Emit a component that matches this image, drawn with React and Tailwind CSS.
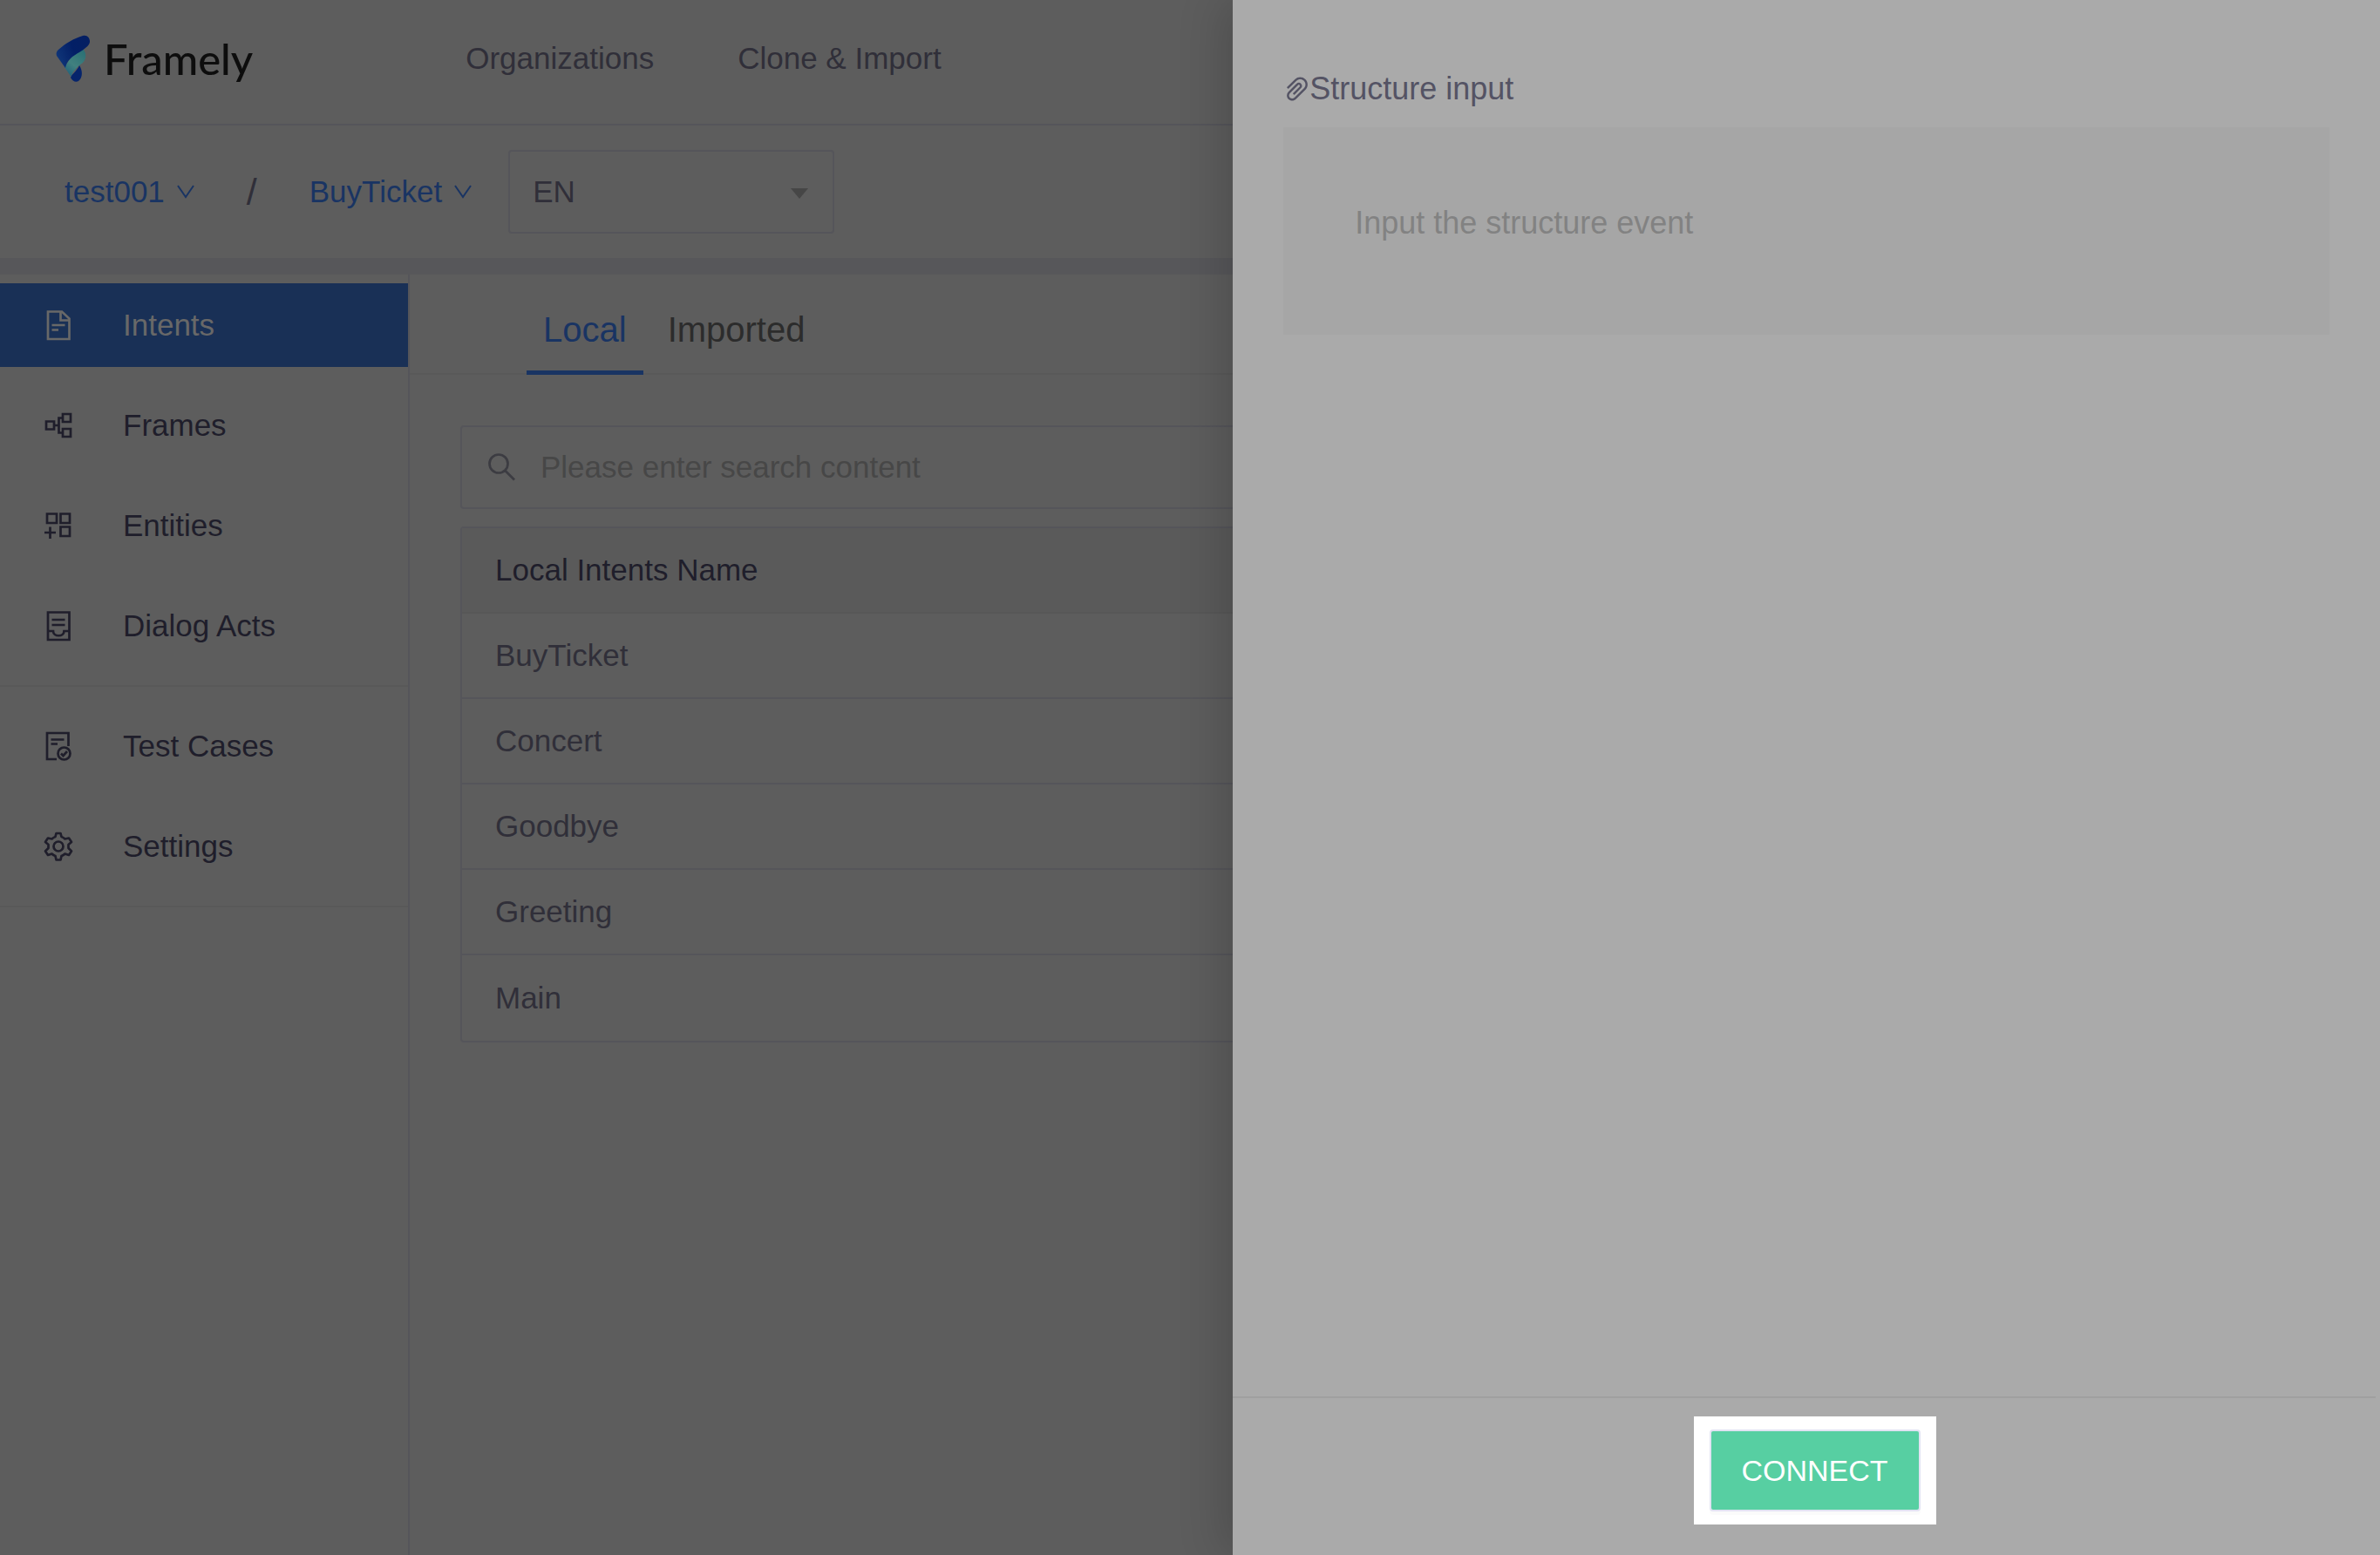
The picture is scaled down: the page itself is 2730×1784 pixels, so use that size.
import React from "react";
import { AiOutlinePaperClip } from "react-icons/ai";

const stroke = { fill: "none", stroke: "currentColor", strokeWidth: 2.7 };

function Logo() {
  return (
    <svg viewBox="0 0 40 54" className="h-[54px] w-10 shrink-0" aria-hidden="true">
      <defs>
        <linearGradient id="g1" x1="0" y1="0.6" x2="1" y2="0.2">
          <stop offset="0" stopColor="#0f3578" />
          <stop offset="0.5" stopColor="#031f66" />
          <stop offset="1" stopColor="#051f62" />
        </linearGradient>
        <linearGradient id="g2" x1="0.8" y1="0" x2="0.2" y2="1">
          <stop offset="0" stopColor="#2a6f74" />
          <stop offset="0.6" stopColor="#41817f" />
          <stop offset="1" stopColor="#1f5f7a" />
        </linearGradient>
      </defs>
      <path d="M27 35C31 41 31 49 26 53C23 55 19 53 17 49C18 45 24 42 27 35Z" fill="#06246c" />
      <path d="M30 15C35 19 36 27 31 32C25 36 20 41 17.500 48L10 37L20 22Z" fill="url(#g2)" />
      <path d="M31 1C37-1 41 6 38 11C34 17 22 22 17 27C13 31 12 34 11 38L1 24C0 21 1 19 3 17C12 9 21 4 31 1Z" fill="url(#g1)" />
    </svg>
  );
}

function Icon({ children }) {
  return (
    <svg viewBox="0 0 36 36" className="size-9 shrink-0" {...stroke} aria-hidden="true">
      {children}
    </svg>
  );
}

const icons = {
  doc: (
    <Icon>
      <path d="M6 2.500H22L30.500 10.500V34H6Z" />
      <path d="M20.500 3V12.500H30" />
      <path d="M10.500 18H25.500M10.500 23.500H18" />
    </Icon>
  ),
  frames: (
    <Icon>
      <path d="M4 13.500H13V22.500H4ZM23 5H32V14H23ZM23 22H32V31H23Z" />
      <path d="M13 18H18.500M23 9.500H18.500V26.500H23" />
    </Icon>
  ),
  entities: (
    <Icon>
      <path d="M5 4.500H16V15H5ZM20.500 4.500H31V15H20.500ZM20.500 19.500H31V30H20.500Z" />
      <path d="M2 26H15M8.500 19.500V33" />
    </Icon>
  ),
  dialog: (
    <Icon>
      <path d="M6 2.500H30.500V34H6Z" />
      <path d="M10.500 11H25.500M10.500 17H25.500M6 24H12C12 31 24.500 31 24.500 24H30.500" />
    </Icon>
  ),
  test: (
    <Icon>
      <path d="M29.500 18V3H5V33H16" />
      <path d="M9.500 10.500H24.500M9.500 15.500H17" />
      <circle cx="24.500" cy="26.500" r="7" />
      <path d="M21 26.500L23.500 29L28 24" />
    </Icon>
  ),
  gear: (
    <Icon>
      <path
        strokeLinejoin="round"
        d="M15.500 3H20.500L21.500 7C23 7.500 24.500 8.500 25.500 9.500L30 8.500L33 13L29.500 16V20L33 23.500L30 28L25.500 26.500C24.500 27.500 23 28.500 21.500 29L20.500 33.500H15.500L14.500 29C13 28.500 11.500 27.500 10.500 26.500L6 28L3 23.500L6.500 20V16L3 13L6 8.500L10.500 9.500C11.500 8.500 13 7.500 14.500 7Z"
      />
      <circle cx="18" cy="18" r="5.500" />
    </Icon>
  ),
};

function SideItem({ icon, label, active }) {
  return (
    <a
      href="#"
      className={
        "flex h-24 items-center gap-14 pl-[49px] text-[35px] " +
        (active ? "bg-[#193056] text-[#686868]" : "text-[#1f1e2b]")
      }
    >
      {icons[icon]}
      <span>{label}</span>
    </a>
  );
}

function Crumb({ label }) {
  return (
    <button type="button" className="flex items-center gap-3.5 text-[35px] text-[#193463]">
      {label}
      <svg viewBox="0 0 20 16" className="h-4 w-5" {...stroke} strokeWidth={2} aria-hidden="true">
        <path d="M1 1L10 14L19 1" />
      </svg>
    </button>
  );
}

const intents = ["BuyTicket", "Concert", "Goodbye", "Greeting", "Main"];

export default function App() {
  return (
    <div className="relative flex min-h-screen flex-col overflow-hidden bg-[#5d5d5d] font-['Liberation_Sans',Arial,sans-serif] text-[35px] leading-10 text-[#302f39]">
      <header className="flex h-36 items-center border-b-2 border-[#55555a] pb-2 pl-16">
        <div className="flex items-center gap-[15px]">
          <Logo />
          <span className="font-['Lato',sans-serif] text-[49px] font-medium text-[#0d0d0d]">Framely</span>
        </div>
        <nav className="ml-[244px] flex gap-24">
          <a href="#">Organizations</a>
          <a href="#">Clone &amp; Import</a>
        </nav>
      </header>

      <div className="flex h-[152px] items-center pl-[74px]">
        <Crumb label="test001" />
        <span className="mx-[60px] text-[43px]">/</span>
        <Crumb label="BuyTicket" />
        <div className="relative ml-[42px]">
          <select
            aria-label="Language"
            className="h-24 w-[374px] appearance-none rounded-sm border-2 border-[#55555a] bg-transparent pl-[26px]"
          >
            <option>EN</option>
          </select>
          <svg viewBox="0 0 20 12" className="pointer-events-none absolute top-11 right-[30px] h-3 w-5" aria-hidden="true">
            <path d="M0 0H20L10 12Z" fill="#464646" />
          </svg>
        </div>
      </div>
      <div className="h-[19px] bg-[#57575a]" />

      <div className="flex flex-1">
        <aside className="w-[470px] shrink-0 border-r-2 border-[#55555a] pt-[10px]">
          <nav>
            <div className="flex flex-col gap-[19px] border-b-2 border-[#595959] pb-5">
              <SideItem icon="doc" label="Intents" active />
              <SideItem icon="frames" label="Frames" />
              <SideItem icon="entities" label="Entities" />
              <SideItem icon="dialog" label="Dialog Acts" />
            </div>
            <div className="flex flex-col gap-[19px] border-b-2 border-[#595959] py-5">
              <SideItem icon="test" label="Test Cases" />
              <SideItem icon="gear" label="Settings" />
            </div>
          </nav>
        </aside>

        <main className="flex-1">
          <div role="tablist" className="flex h-[115px] items-end border-b-2 border-[#595959] pl-[134px] text-[40px] text-[#2c2c2c]">
            <button type="button" role="tab" aria-selected="true" className="-mb-0.5 border-b-[5px] border-[#193463] px-[19px] pb-[27px] text-[#193463]">
              Local
            </button>
            <button type="button" role="tab" aria-selected="false" className="-mb-0.5 border-b-[5px] border-transparent px-7 pb-[27px]">
              Imported
            </button>
          </div>
          <div className="flex flex-col gap-5 px-[58px] pt-[58px]">
            <label className="flex h-24 items-center gap-7 rounded-sm border-2 border-[#55555a] pl-7">
              <svg viewBox="0 0 34 34" className="size-[34px] text-[#3c3c42]" {...stroke} aria-hidden="true">
                <circle cx="14" cy="13" r="10.500" />
                <path d="M21.500 21L32 31.500" />
              </svg>
              <input
                type="search"
                aria-label="Search"
                placeholder="Please enter search content"
                className="min-w-0 flex-1 bg-transparent outline-none placeholder:text-[#474747]"
              />
            </label>
            <div className="rounded-sm border-2 border-[#55555a]">
              <table className="w-full border-separate border-spacing-0 text-left">
                <thead>
                  <tr>
                    <th className="h-[98px] border-b-2 border-[#575757] bg-[#5a5a5a] pl-[38px] font-normal text-[#1f1e2b]">
                      Local Intents Name
                    </th>
                  </tr>
                </thead>
                <tbody>
                  {intents.map((name) => (
                    <tr key={name} className="group">
                      <td className="h-[98px] border-b-2 border-[#55555a] pl-[38px] group-last:border-b-0">{name}</td>
                    </tr>
                  ))}
                </tbody>
              </table>
            </div>
          </div>
        </main>
      </div>

      <section
        aria-label="Structure input"
        className="absolute inset-y-0 right-0 flex w-[48.2%] flex-col bg-[#aaaaaa] shadow-[-12px_0_48px_rgba(0,0,0,0.16)]"
      >
        <div className="flex flex-1 flex-col gap-6 px-[58px] pt-[82px] text-[36px]">
          <label htmlFor="event" className="flex items-center text-[#545364]">
            <AiOutlinePaperClip className="-mr-1 -ml-0.5 size-9" aria-hidden="true" />
            Structure input
          </label>
          <textarea
            id="event"
            placeholder="Input the structure event"
            className="h-[238px] resize-none bg-[#a6a6a6] px-[82px] py-[90px] outline-none placeholder:text-[#828282]"
          />
        </div>
        <footer className="mr-[5px] flex h-[182px] items-start justify-center border-t-2 border-[#a0a0a0] pt-[21px]">
          <div className="ml-6 bg-white px-[18px] py-[15px]">
            <button
              type="button"
              className="h-[94px] w-[242px] rounded-sm border-2 border-[#e2e3f3] bg-[#57cfa2] text-[34px] text-white shadow-[0_4px_0_rgba(0,0,0,0.015)]"
            >
              CONNECT
            </button>
          </div>
        </footer>
      </section>
    </div>
  );
}
